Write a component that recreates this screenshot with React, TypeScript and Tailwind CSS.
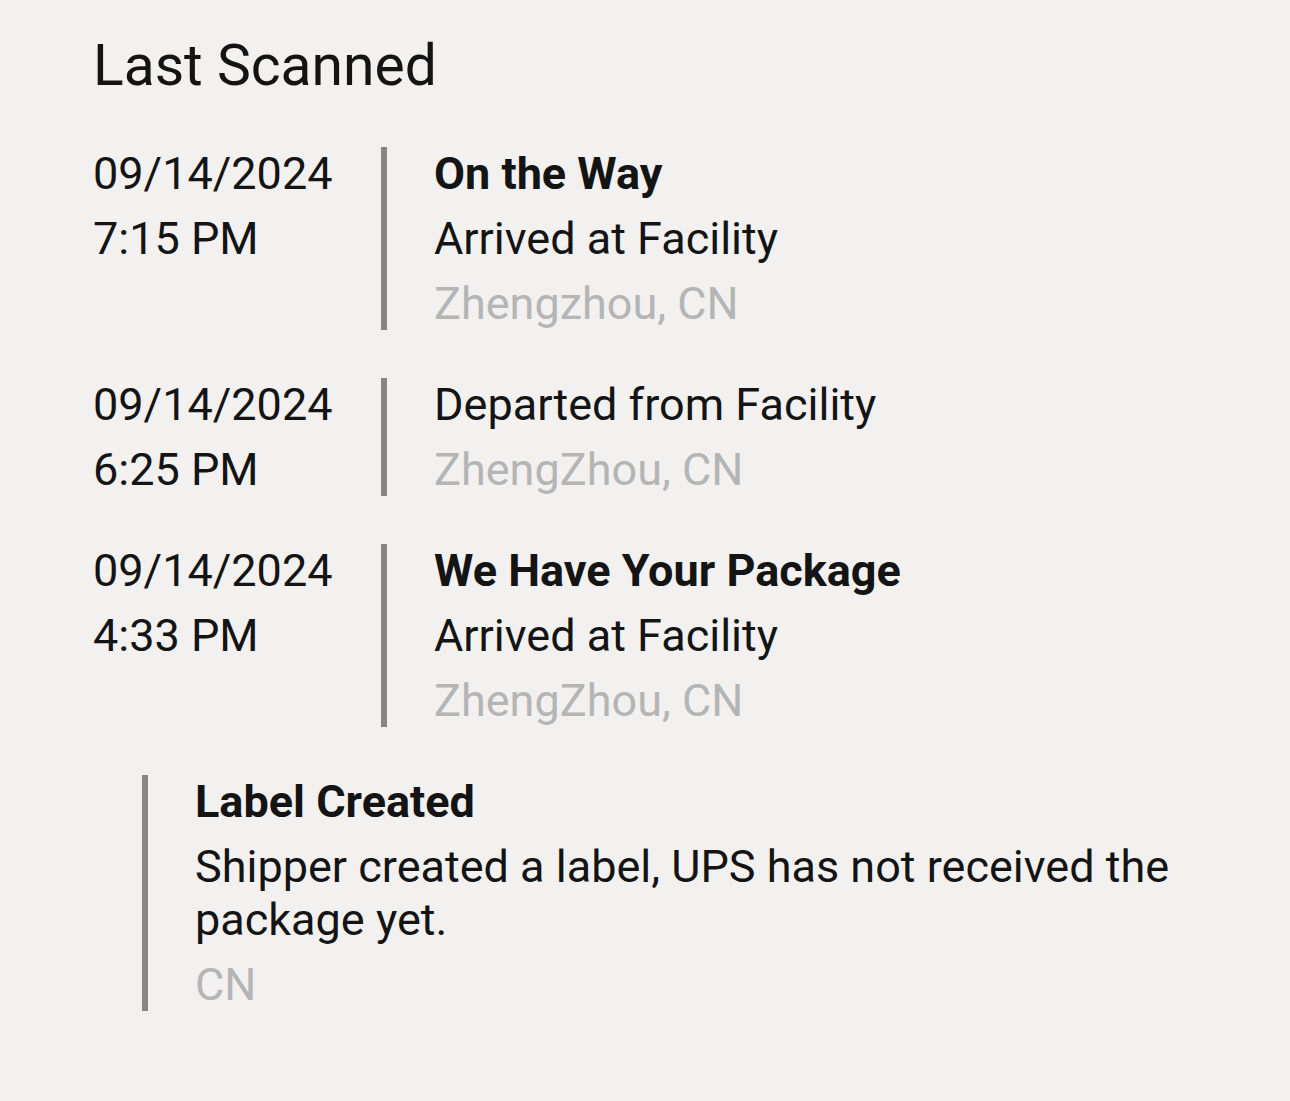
import React from "react";

type Scan = {
  id: string;
  date: string;
  time: string;
  title?: string;
  activity: string;
  location: string;
};

const scans: Scan[] = [
  {
    id: "1",
    date: "09/14/2024",
    time: "7:15 PM",
    title: "On the Way",
    activity: "Arrived at Facility",
    location: "Zhengzhou, CN",
  },
  {
    id: "2",
    date: "09/14/2024",
    time: "6:25 PM",
    activity: "Departed from Facility",
    location: "ZhengZhou, CN",
  },
  {
    id: "3",
    date: "09/14/2024",
    time: "4:33 PM",
    title: "We Have Your Package",
    activity: "Arrived at Facility",
    location: "ZhengZhou, CN",
  },
];

export default function App() {
  return (
    <div
      className="min-h-screen bg-[#f2f1ef] pl-[93px] pr-[92px] pt-8 pb-16 text-[#141414]"
      style={{ fontFamily: "Roboto, 'Noto Sans', sans-serif" }}
    >
      <h1 className="text-[57px] leading-[67px] font-normal">Last Scanned</h1>

      {/* scan history */}
      <div className="mt-12 flex flex-col gap-12 text-[45px] leading-[53px]">
        {scans.map((scan) => (
          <div key={scan.id} className="flex">
            <div className="w-[288px] shrink-0 flex flex-col gap-3">
              <div>{scan.date}</div>
              <div>{scan.time}</div>
            </div>
            <div className="w-1.5 shrink-0 bg-[#8b8685]" />
            <div className="pl-[47px] flex flex-col gap-3">
              {scan.title && <div className="font-bold">{scan.title}</div>}
              <div>{scan.activity}</div>
              <div className="text-[#b5b5b5]">{scan.location}</div>
            </div>
          </div>
        ))}

        {/* label created */}
        <div className="ml-[49px] flex">
          <div className="w-1.5 shrink-0 bg-[#8b8685]" />
          <div className="pl-[47px] flex flex-col gap-3">
            <div className="font-bold">Label Created</div>
            <p>Shipper created a label, UPS has not received the package yet.</p>
            <div className="text-[#b5b5b5]">CN</div>
          </div>
        </div>
      </div>
    </div>
  );
}
